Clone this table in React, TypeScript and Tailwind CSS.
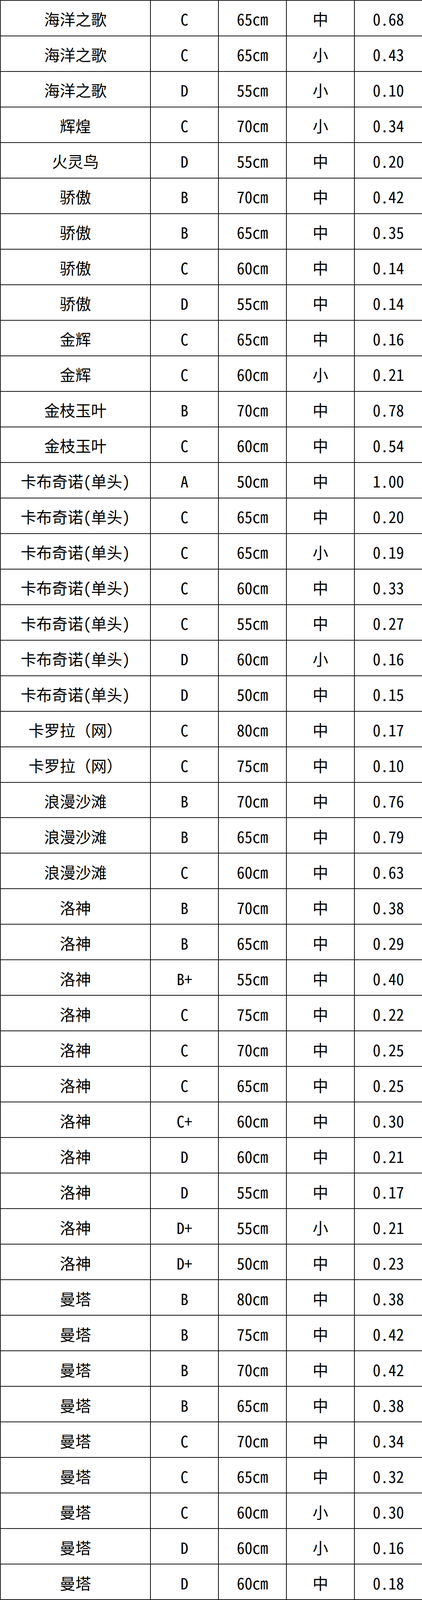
const rows: [string, string, string, string, string][] = [
  ['海洋之歌', 'C', '65cm', '中', '0.68'],
  ['海洋之歌', 'C', '65cm', '小', '0.43'],
  ['海洋之歌', 'D', '55cm', '小', '0.10'],
  ['辉煌', 'C', '70cm', '小', '0.34'],
  ['火灵鸟', 'D', '55cm', '中', '0.20'],
  ['骄傲', 'B', '70cm', '中', '0.42'],
  ['骄傲', 'B', '65cm', '中', '0.35'],
  ['骄傲', 'C', '60cm', '中', '0.14'],
  ['骄傲', 'D', '55cm', '中', '0.14'],
  ['金辉', 'C', '65cm', '中', '0.16'],
  ['金辉', 'C', '60cm', '小', '0.21'],
  ['金枝玉叶', 'B', '70cm', '中', '0.78'],
  ['金枝玉叶', 'C', '60cm', '中', '0.54'],
  ['卡布奇诺(单头)', 'A', '50cm', '中', '1.00'],
  ['卡布奇诺(单头)', 'C', '65cm', '中', '0.20'],
  ['卡布奇诺(单头)', 'C', '65cm', '小', '0.19'],
  ['卡布奇诺(单头)', 'C', '60cm', '中', '0.33'],
  ['卡布奇诺(单头)', 'C', '55cm', '中', '0.27'],
  ['卡布奇诺(单头)', 'D', '60cm', '小', '0.16'],
  ['卡布奇诺(单头)', 'D', '50cm', '中', '0.15'],
  ['卡罗拉（网）', 'C', '80cm', '中', '0.17'],
  ['卡罗拉（网）', 'C', '75cm', '中', '0.10'],
  ['浪漫沙滩', 'B', '70cm', '中', '0.76'],
  ['浪漫沙滩', 'B', '65cm', '中', '0.79'],
  ['浪漫沙滩', 'C', '60cm', '中', '0.63'],
  ['洛神', 'B', '70cm', '中', '0.38'],
  ['洛神', 'B', '65cm', '中', '0.29'],
  ['洛神', 'B+', '55cm', '中', '0.40'],
  ['洛神', 'C', '75cm', '中', '0.22'],
  ['洛神', 'C', '70cm', '中', '0.25'],
  ['洛神', 'C', '65cm', '中', '0.25'],
  ['洛神', 'C+', '60cm', '中', '0.30'],
  ['洛神', 'D', '60cm', '中', '0.21'],
  ['洛神', 'D', '55cm', '中', '0.17'],
  ['洛神', 'D+', '55cm', '小', '0.21'],
  ['洛神', 'D+', '50cm', '中', '0.23'],
  ['曼塔', 'B', '80cm', '中', '0.38'],
  ['曼塔', 'B', '75cm', '中', '0.42'],
  ['曼塔', 'B', '70cm', '中', '0.42'],
  ['曼塔', 'B', '65cm', '中', '0.38'],
  ['曼塔', 'C', '70cm', '中', '0.34'],
  ['曼塔', 'C', '65cm', '中', '0.32'],
  ['曼塔', 'C', '60cm', '小', '0.30'],
  ['曼塔', 'D', '60cm', '小', '0.16'],
  ['曼塔', 'D', '60cm', '中', '0.18'],
]

export default function App() {
  return (
    <div className="h-[4096px] w-[1080px] overflow-hidden bg-white font-['Noto_Sans_Mono_CJK_SC','Noto_Sans_CJK_SC',monospace] text-[40px] text-black">
      <div className="grid h-full grid-cols-[384px_174px_174px_174px_174px] grid-rows-[repeat(45,minmax(0,1fr))] border-l-2 border-t-2 border-[#222]">
        {rows.map((row, i) =>
          row.map((cell, j) => (
            <div
              key={`${i}-${j}`}
              className="flex min-h-0 items-center justify-center overflow-hidden border-b-2 border-r-2 border-[#111] pt-[4px] leading-none"
            >
              {cell}
            </div>
          )),
        )}
      </div>
    </div>
  )
}
